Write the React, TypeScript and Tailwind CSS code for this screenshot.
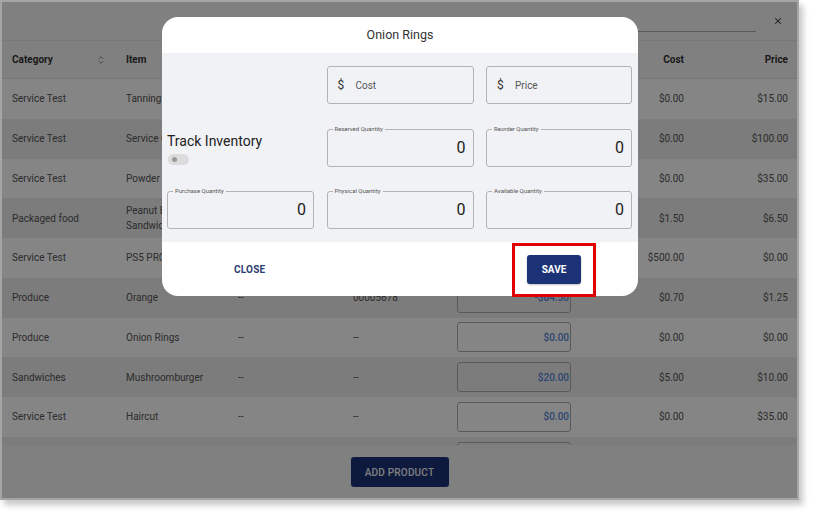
import React from "react";
import { ChevronsUpDown, X } from "lucide-react";

type Row = {
  cat: string;
  item: React.ReactNode;
  c3: string;
  c4: string;
  val: string;
  cost: string;
  price: string;
};

const rows: Row[] = [
  { cat: "Service Test", item: "Tanning Session", c3: "--", c4: "--", val: "$0.00", cost: "$0.00", price: "$15.00" },
  { cat: "Service Test", item: "Service Call", c3: "--", c4: "--", val: "$0.00", cost: "$0.00", price: "$100.00" },
  { cat: "Service Test", item: "Powder Coating", c3: "--", c4: "--", val: "$0.00", cost: "$0.00", price: "$35.00" },
  {
    cat: "Packaged food",
    item: (
      <span className="leading-[15px]">
        Peanut Butter
        <br />
        Sandwich
      </span>
    ),
    c3: "--",
    c4: "--",
    val: "$0.00",
    cost: "$1.50",
    price: "$6.50",
  },
  { cat: "Service Test", item: "PS5 PRO", c3: "--", c4: "--", val: "$0.00", cost: "$500.00", price: "$0.00" },
  { cat: "Produce", item: "Orange", c3: "--", c4: "00005678", val: "-$84.50", cost: "$0.70", price: "$1.25" },
  { cat: "Produce", item: "Onion Rings", c3: "--", c4: "--", val: "$0.00", cost: "$0.00", price: "$0.00" },
  { cat: "Sandwiches", item: "Mushroomburger", c3: "--", c4: "--", val: "$20.00", cost: "$5.00", price: "$10.00" },
  { cat: "Service Test", item: "Haircut", c3: "--", c4: "--", val: "$0.00", cost: "$0.00", price: "$35.00" },
  { cat: "Service Test", item: "Massage", c3: "--", c4: "--", val: "$0.00", cost: "$0.00", price: "$50.00" },
];

const gridCols =
  "grid grid-cols-[114px_112px_115px_104px_114px_113px_104px] pl-[10px] pr-[9px]";

function Outlined({ label, value }: { label: string; value: string }) {
  return (
    <div className="relative h-[38px] rounded-[3px] border border-[#b3b3b3] flex items-center justify-end pr-[7px]">
      <span className="absolute left-[5px] top-[-5px] bg-[#f1f2f6] px-[2px] text-[6px] leading-[8px] text-[#555]">
        {label}
      </span>
      <span className="text-[16px] text-[#222]">{value}</span>
    </div>
  );
}

function Adorned({ label }: { label: string }) {
  return (
    <div className="h-[38px] rounded-[3px] border border-[#b3b3b3] flex items-center pl-[10px]">
      <span className="text-[12px] text-[#333] w-[18px]">$</span>
      <span className="text-[10px] text-[#555]">{label}</span>
    </div>
  );
}

export default function App() {
  return (
    <div className="w-[825px] h-[524px] bg-white font-['Roboto',sans-serif]">
      <div className="relative w-[799px] h-[500px] border-2 border-[#a5a5a5] shadow-[4px_5px_6px_rgba(0,0,0,0.22)]">
        {/* underlying page */}
        <div className="flex flex-col h-full bg-[#f6f6f6]">
          <div className="h-[39px] flex items-center justify-end border-b border-[#e6e6e6]">
            <div className="mt-[20px] w-[121px] h-px bg-[#adadad] mr-[17px]" />
            <X size={10} strokeWidth={2.5} className="text-[#333] mr-[14px]" />
          </div>
          <div className={`${gridCols} h-[38px] items-center border-b border-[#e2e2e2] text-[10px] font-bold text-[#333]`}>
            <div className="flex items-center">
              <span>Category</span>
              <ChevronsUpDown size={10} strokeWidth={2} className="ml-auto mr-[20px] text-[#777]" />
            </div>
            <div>Item</div>
            <div />
            <div />
            <div />
            <div className="text-right">Cost</div>
            <div className="text-right">Price</div>
          </div>
          <div className="h-[366px] overflow-hidden">
            {rows.map((r, i) => (
              <div
                key={i}
                className={`${gridCols} h-[39.75px] items-center text-[10px] text-[#555] ${
                  i % 2 === 0 ? "bg-white" : "bg-[#ededed]"
                }`}
              >
                <div>{r.cat}</div>
                <div>{r.item}</div>
                <div>{r.c3}</div>
                <div>{r.c4}</div>
                <div className="h-[30px] rounded-[3px] border border-[#adadad] flex items-center justify-end pr-[1px] text-[10px] font-medium text-[#5585d8]">
                  {r.val}
                </div>
                <div className="text-right">{r.cost}</div>
                <div className="text-right">{r.price}</div>
              </div>
            ))}
          </div>
          <div className="flex-1 flex items-center justify-center pt-[1px]">
            <button className="w-[98px] h-[30px] rounded-[3px] bg-[#1c3276] text-[10px] font-medium text-[#eef0f5] tracking-[0.2px]">
              ADD PRODUCT
            </button>
          </div>
        </div>

        {/* overlay */}
        <div className="absolute inset-0 bg-black/[0.48]" />

        {/* modal */}
        <div className="absolute left-[160px] top-[15px] w-[476px] h-[279px] rounded-2xl bg-white overflow-hidden flex flex-col">
          <div className="h-[36px] flex items-center justify-center text-[12.5px] text-[#333]">Onion Rings</div>
          <div className="bg-[#f1f2f6] h-[189px] px-[5px] pt-[13px] grid grid-cols-[147px_147px_146px] gap-x-[12.5px] grid-rows-[38px_38px_38px] gap-y-[24.5px]">
            <div />
            <Adorned label="Cost" />
            <Adorned label="Price" />
            <div className="flex flex-col justify-center pt-[3px]">
              <span className="text-[14px] leading-[17px] text-[#222]">Track Inventory</span>
              <div className="mt-[4px] ml-[1px] w-[21px] h-[11px] rounded-full bg-[#dcdcdc] flex items-center pl-[4px]">
                <div className="w-[5px] h-[5px] rounded-full bg-[#9a9a9a]" />
              </div>
            </div>
            <Outlined label="Reserved Quantity" value="0" />
            <Outlined label="Reorder Quantity" value="0" />
            <Outlined label="Purchase Quantity" value="0" />
            <Outlined label="Physical Quantity" value="0" />
            <Outlined label="Available Quantity" value="0" />
          </div>
          <div className="flex-1 flex items-center justify-between pl-[72px] pr-[57px]">
            <button className="text-[10px] font-bold text-[#2c3e73] tracking-[0.2px]">CLOSE</button>
            <button className="w-[54px] h-[29px] rounded-[3px] bg-[#1c3276] text-[10px] font-bold text-white shadow-[0_1px_2px_rgba(0,0,0,0.25)]">
              SAVE
            </button>
          </div>
        </div>

        {/* annotation */}
        <div className="absolute left-[510px] top-[241px] w-[84px] h-[54px] border-[3px] border-[#e00000]" />
      </div>
    </div>
  );
}
